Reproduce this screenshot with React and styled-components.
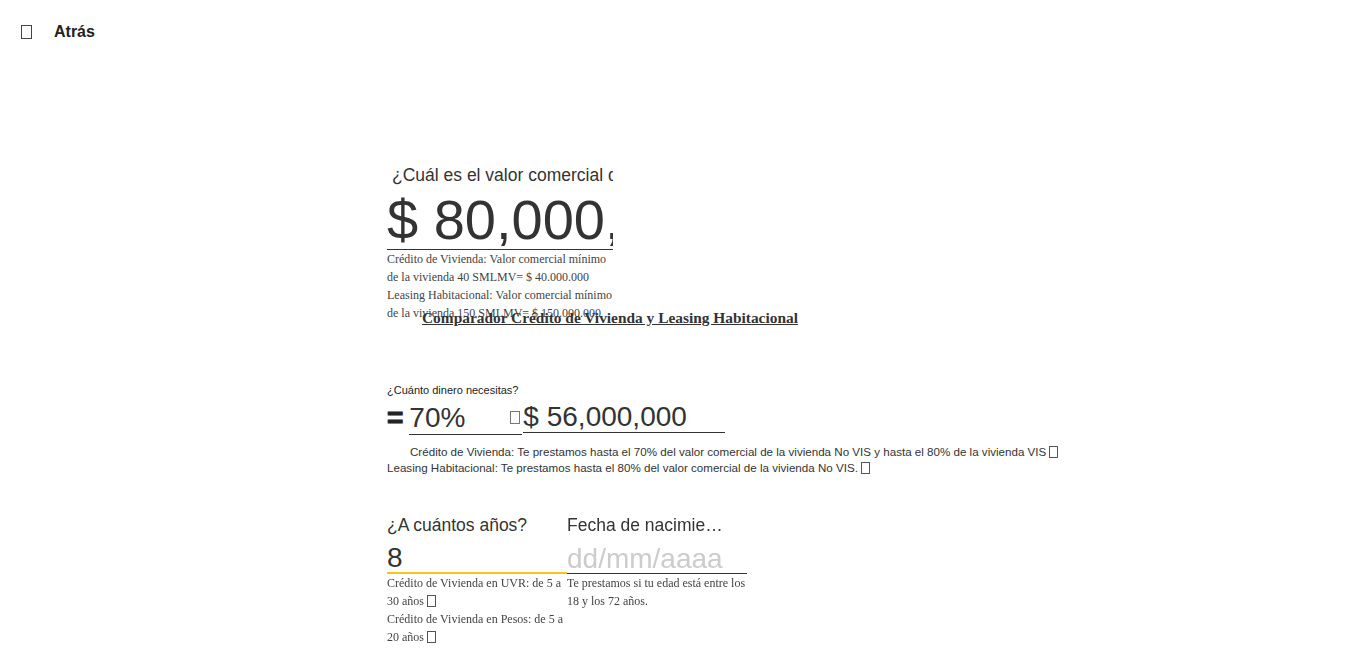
import styled, { createGlobalStyle } from 'styled-components';

const GlobalStyle = createGlobalStyle`
  body {
    margin: 0;
    background: #fff;
    color: #333;
    font-family: "Liberation Sans", Arial, sans-serif;
  }
`;

const Page = styled.div`
  min-width: 1457px;
  min-height: 927px;
`;

const TopBar = styled.header`
  display: flex;
  align-items: center;
  gap: 22px;
  height: 64px;
  padding-left: 21px;
`;

const Tofu = styled.span`
  display: inline-block;
  box-sizing: border-box;
  width: ${({ $w }) => $w || 9}px;
  height: ${({ $h }) => $h || 12}px;
  border: 1px solid ${({ $color }) => $color || '#555'};
  vertical-align: ${({ $align }) => $align || '-2px'};
  margin-left: ${({ $ml }) => ($ml === undefined ? 3 : $ml)}px;
  text-indent: 0;
`;

const BackLabel = styled.span`
  font-size: 16px;
  font-weight: bold;
  color: #222;
`;

const Main = styled.main`
  width: 683px;
  margin: 0 auto;
  padding-top: 101px;
`;

const ValueField = styled.section`
  width: 226px;
  height: 144px;
`;

const Question = styled.label`
  display: block;
  font-size: 17.5px;
  line-height: 21px;
  padding-left: 5px;
  white-space: nowrap;
  overflow: hidden;
`;

const BigInput = styled.input`
  display: block;
  box-sizing: content-box;
  width: 226px;
  height: 59px;
  padding: 4px 0 0;
  border: none;
  border-bottom: 1px solid #333;
  outline: none;
  font-family: inherit;
  font-size: 56px;
  color: #333;
  background: transparent;
`;

const SerifNote = styled.p`
  margin: 0;
  font-family: "Liberation Serif", "Times New Roman", serif;
  font-size: 12px;
  line-height: 18px;
  color: #444;
`;

const Title = styled.h2`
  margin: 0;
  padding-left: 35px;
  font-family: "Liberation Serif", "Times New Roman", serif;
  font-size: 15.4px;
  line-height: 17px;
  font-weight: bold;
  text-decoration: underline;
  color: #333;
`;

const SmallLabel = styled.label`
  display: block;
  margin-top: 58px;
  font-size: 11px;
  line-height: 13px;
  color: #222;
`;

const AmountRow = styled.div`
  display: flex;
  align-items: flex-start;
  margin-top: 1px;
`;

const Equals = styled.span`
  padding-top: 3px;
  font-size: 28px;
  line-height: 33px;
  font-weight: bold;
  color: #222;
  -webkit-text-stroke: 1px #222;
  margin-right: 6px;
`;

const PercentSelect = styled.div`
  display: flex;
  align-items: center;
  justify-content: space-between;
  box-sizing: content-box;
  width: 111px;
  height: 33px;
  padding: 3px 2px 0 0;
  border-bottom: 1px solid #333;
  font-size: 28px;
  line-height: 33px;
  color: #333;
`;

const AmountInput = styled.input`
  box-sizing: content-box;
  width: 202px;
  height: 31px;
  margin-left: 1px;
  padding: 3px 0 0;
  border: none;
  border-bottom: 1px solid #333;
  outline: none;
  font-family: inherit;
  font-size: 28px;
  color: #333;
  background: transparent;
`;

const Description = styled.p`
  margin: 9px 0 0;
  font-size: 11.6px;
  line-height: 16px;
  text-indent: 23px;
  color: #333;
`;

const TermRow = styled.div`
  display: grid;
  grid-template-columns: 180px 180px;
  margin-top: 39px;
`;

const Column = styled.div`
  display: flex;
  flex-direction: column;
`;

const FieldLabel = styled.label`
  padding-right: 22px;
  font-size: 17.5px;
  line-height: 21px;
  white-space: nowrap;
  overflow: hidden;
  text-overflow: ellipsis;
`;

const LineInput = styled.input`
  box-sizing: content-box;
  width: 180px;
  height: ${({ $active }) => ($active ? 28 : 29)}px;
  padding: 8px 0 0;
  border: none;
  border-bottom: ${({ $active }) => ($active ? '2px solid #f5c518' : '1px solid #333')};
  outline: none;
  font-family: inherit;
  font-size: 28px;
  color: #333;
  background: transparent;
  caret-color: #f5c518;

  &::placeholder {
    color: #ccc;
  }
`;

function App() {
  return (
    <Page>
      <GlobalStyle />
      <TopBar>
        <Tofu $w={11} $h={14} $color="#444" $ml={0} />
        <BackLabel>Atrás</BackLabel>
      </TopBar>

      <Main>
        <ValueField>
          <Question>¿Cuál es el valor comercial de la vivienda?</Question>
          <BigInput defaultValue="$ 80,000,000" />
          <SerifNote>
            Crédito de Vivienda: Valor comercial mínimo de la vivienda 40 SMLMV= $ 40.000.000
          </SerifNote>
          <SerifNote>
            Leasing Habitacional: Valor comercial mínimo de la vivienda 150 SMLMV= $ 150.000.000
          </SerifNote>
        </ValueField>

        <Title>Comparador Crédito de Vivienda y Leasing Habitacional</Title>

        <SmallLabel>¿Cuánto dinero necesitas?</SmallLabel>
        <AmountRow>
          <Equals>=</Equals>
          <PercentSelect>
            <span>70%</span>
            <Tofu $w={10} $h={13} $color="#777" $ml={0} $align="0" />
          </PercentSelect>
          <AmountInput defaultValue="$ 56,000,000" />
        </AmountRow>

        <Description>
          Crédito de Vivienda: Te prestamos hasta el 70% del valor comercial de la vivienda No VIS y
          hasta el 80% de la vivienda VIS
          <Tofu />
          <br />
          Leasing Habitacional: Te prestamos hasta el 80% del valor comercial de la vivienda No VIS.
          <Tofu />
        </Description>

        <TermRow>
          <Column>
            <FieldLabel>¿A cuántos años?</FieldLabel>
            <LineInput $active defaultValue="8" autoFocus />
            <SerifNote>
              Crédito de Vivienda en UVR: de 5 a 30 años
              <Tofu />
            </SerifNote>
            <SerifNote>
              Crédito de Vivienda en Pesos: de 5 a 20 años
              <Tofu />
            </SerifNote>
            <SerifNote>
              Leasing Habitacional: de 5 a 20 años
              <Tofu />
            </SerifNote>
          </Column>
          <Column>
            <FieldLabel>Fecha de nacimiento</FieldLabel>
            <LineInput placeholder="dd/mm/aaaa" />
            <SerifNote>Te prestamos si tu edad está entre los 18 y los 72 años.</SerifNote>
          </Column>
        </TermRow>
      </Main>
    </Page>
  );
}

export default App;
